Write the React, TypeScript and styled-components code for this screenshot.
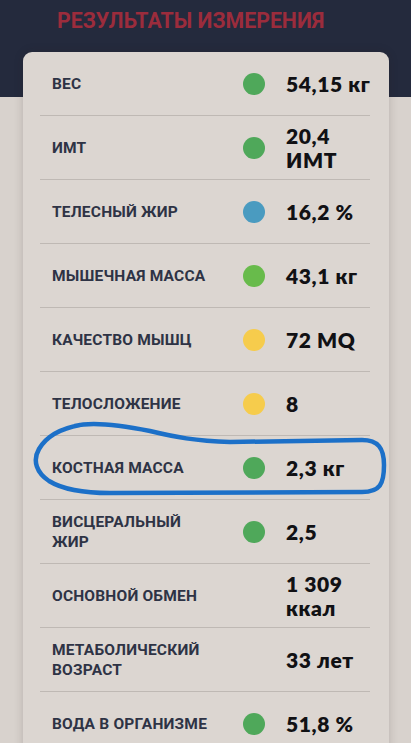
import * as React from 'react';
import styled, { createGlobalStyle } from 'styled-components';

const GlobalStyle = createGlobalStyle`
  html, body {
    margin: 0;
    padding: 0;
    background: #d8d2cd;
    overflow: hidden;
  }
  * {
    box-sizing: border-box;
  }
`;

type Dot = 'green' | 'lime' | 'blue' | 'yellow' | 'none';

interface Measure {
  label: string;
  value: string;
  dot: Dot;
  circled?: boolean;
}

const measures: Measure[] = [
  { label: 'ВЕС', value: '54,15 кг', dot: 'green' },
  { label: 'ИМТ', value: '20,4\nИМТ', dot: 'green' },
  { label: 'ТЕЛЕСНЫЙ ЖИР', value: '16,2 %', dot: 'blue' },
  { label: 'МЫШЕЧНАЯ МАССА', value: '43,1 кг', dot: 'lime' },
  { label: 'КАЧЕСТВО МЫШЦ', value: '72 MQ', dot: 'yellow' },
  { label: 'ТЕЛОСЛОЖЕНИЕ', value: '8', dot: 'yellow' },
  { label: 'КОСТНАЯ МАССА', value: '2,3 кг', dot: 'green', circled: true },
  { label: 'ВИСЦЕРАЛЬНЫЙ ЖИР', value: '2,5', dot: 'green' },
  { label: 'ОСНОВНОЙ ОБМЕН', value: '1 309\nккал', dot: 'none' },
  { label: 'МЕТАБОЛИЧЕСКИЙ ВОЗРАСТ', value: '33 лет', dot: 'none' },
  { label: 'ВОДА В ОРГАНИЗМЕ', value: '51,8 %', dot: 'green' },
];

const dotColors: Record<Dot, string> = {
  green: '#4fa85a',
  lime: '#68bb4b',
  blue: '#4a9bc0',
  yellow: '#f6cc4c',
  none: 'transparent',
};

const Page = styled.div`
  width: 411px;
  height: 743px;
  overflow: hidden;
`;

const Header = styled.header`
  height: 97px;
  background: #242a3d;
  padding: 8px 0 0 57px;
`;

const Title = styled.h1`
  margin: 0;
  font-family: Roboto, 'Liberation Sans', sans-serif;
  font-weight: 700;
  font-size: 21.3px;
  line-height: 26px;
  color: #9b2c3c;
`;

const Card = styled.section`
  position: relative;
  margin: -45px 0 0 23px;
  width: 366px;
  background: #dcd6d1;
  border-radius: 9px;
  box-shadow: 0 0 10px rgba(40, 30, 25, 0.18);
  padding: 0 19px 40px 17px;
`;

const Row = styled.div`
  position: relative;
  display: grid;
  grid-template-columns: 1fr 22px 84px;
  column-gap: 21px;
  align-items: center;
  height: 64px;
  padding-left: 12px;
  border-bottom: 1px solid #bfb9b4;
`;

const Label = styled.div`
  max-width: 162px;
  font-family: Roboto, 'Liberation Sans', sans-serif;
  font-weight: 700;
  font-size: 15.5px;
  line-height: 20px;
  letter-spacing: 0.2px;
  color: #2e3345;
`;

const Indicator = styled.span<{ $color: string }>`
  width: 22px;
  height: 22px;
  border-radius: 50%;
  background: ${p => p.$color};
`;

const Value = styled.div`
  white-space: pre;
  font-family: Lato, 'Open Sans', sans-serif;
  font-weight: 800;
  font-size: 21px;
  line-height: 24px;
  letter-spacing: 0.6px;
  color: #111114;
`;

const Circle = styled.svg`
  position: absolute;
  left: -7px;
  top: -17px;
  width: 356px;
  height: 84px;
  pointer-events: none;
  overflow: visible;
`;

const HandCircle = () => (
  <Circle viewBox="33 420 356 84">
    <path
      d="M 75 427 C 90 423, 120 426, 150 432 C 175 438, 195 442, 230 443 L 362 441 C 378 441, 384 449, 384 466 C 384 485, 380 493, 362 493 L 110 494 C 82 494, 62 490, 49 482 C 37 474, 32 462, 39 450 C 46 438, 58 430, 80 426"
      fill="none"
      stroke="#1c70c8"
      strokeWidth={4.5}
      strokeLinecap="round"
      strokeLinejoin="round"
    />
  </Circle>
);

export default function App() {
  return (
    <Page>
      <GlobalStyle />
      <Header>
        <Title>РЕЗУЛЬТАТЫ ИЗМЕРЕНИЯ</Title>
      </Header>
      <Card>
        {measures.map(m => (
          <Row key={m.label}>
            <Label>{m.label}</Label>
            <Indicator $color={dotColors[m.dot]} />
            <Value>{m.value}</Value>
            {m.circled && <HandCircle />}
          </Row>
        ))}
      </Card>
    </Page>
  );
}
